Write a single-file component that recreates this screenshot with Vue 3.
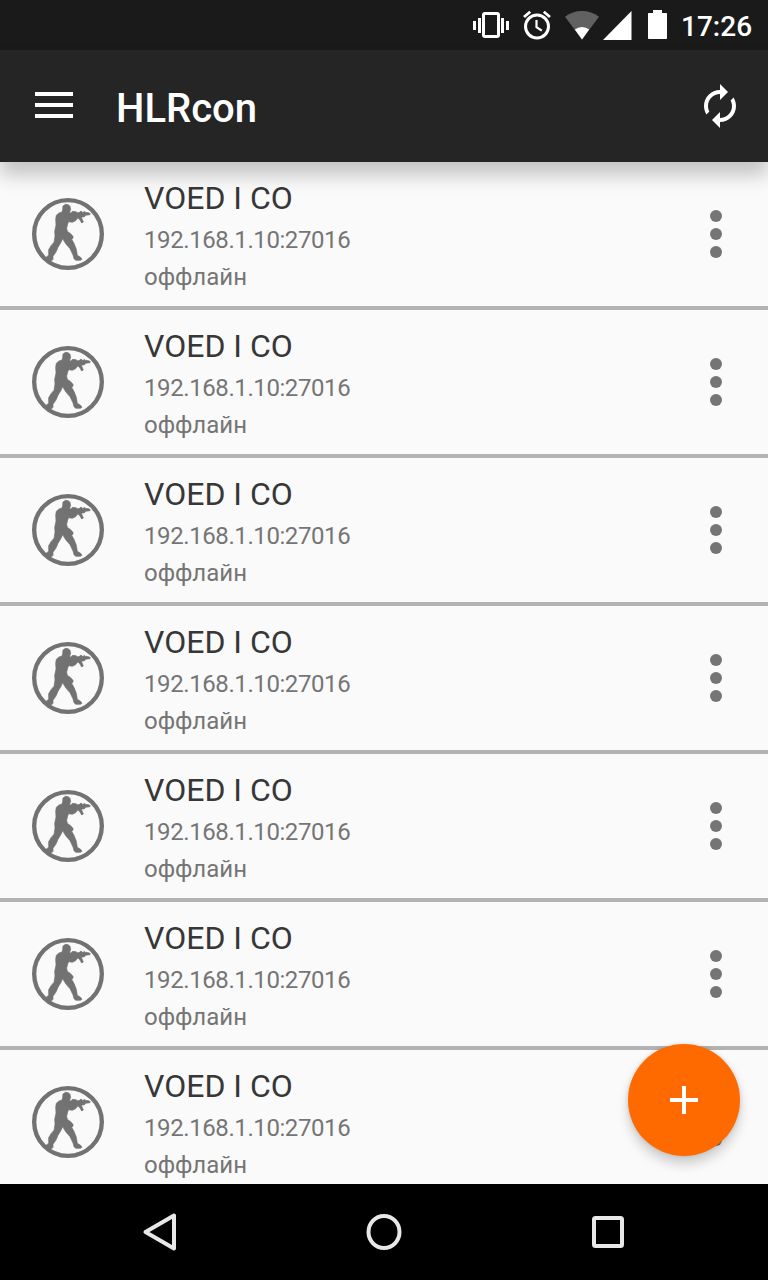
<template>
  <div class="screen">
    <header class="status-bar">
      <svg class="vibrate" width="36" height="28" viewBox="0 0 36 28">
        <rect x="10.5" y="2.5" width="15" height="23" rx="1.5" fill="none" stroke="#fff" stroke-width="3" />
        <path d="M0 10h3v9H0zM5 7h3v15H5zM28 7h3v15h-3zM33 10h3v9h-3z" fill="#fff" />
      </svg>
      <svg class="alarm" width="28" height="30" viewBox="0 0 28 30" fill="none" stroke="#fff">
        <circle cx="14" cy="16.5" r="11.5" stroke-width="3" />
        <path d="M1 7l6.2-5.2M27 7l-6.2-5.2" stroke-width="2.8" />
        <path d="M13.5 10v7.2l5.3 3.5" stroke-width="2.2" />
      </svg>
      <svg class="wifi" width="34" height="29" viewBox="0 0 34 29">
        <path d="M0 5.7Q7.5 0 17 0t17 5.700L17 28.5z" fill="#616161" />
        <path d="M9.8 18.6Q13 16 17 16t7.2 2.600L17 28.5z" fill="#fff" />
      </svg>
      <svg class="signal" width="29" height="29" viewBox="0 0 29 29">
        <path d="M28.5 0v29H0z" fill="#fff" />
      </svg>
      <svg class="battery" width="19" height="29" viewBox="0 0 19 29">
        <path d="M5 0h9v3h4.200q.8 0 .8.800v24.400q0 .8-.8.800H.8Q0 29 0 28.200V3.800Q0 3 .8 3H5z" fill="#fff" />
      </svg>
      <span class="clock">17:26</span>
    </header>

    <div class="toolbar">
      <button class="menu-btn">
        <span></span>
        <span></span>
        <span></span>
      </button>
      <h1>HLRcon</h1>
      <button class="refresh-btn">
        <svg width="48" height="48" viewBox="0 0 24 24" fill="#fff">
          <path d="M12 6v3l4-4-4-4v3c-4.420 0-8 3.580-8 8 0 1.570.46 3.030 1.240 4.260L6.700 14.800c-.45-.83-.7-1.790-.7-2.800 0-3.310 2.690-6 6-6zm6.760 1.740L17.300 9.200c.44.840.7 1.790.7 2.800 0 3.310-2.690 6-6 6v-3l-4 4 4 4v-3c4.420 0 8-3.580 8-8 0-1.570-.46-3.030-1.240-4.260z" />
        </svg>
      </button>
    </div>

    <main class="list">
      <div v-for="server in servers" :key="server.id" class="row">
        <svg class="logo" width="72" height="72" viewBox="6 6 216 216" fill="#727272" stroke="#727272">
          <circle cx="114" cy="114" r="101.5" fill="none" stroke-width="13" />
          <path stroke-width="2" stroke-linejoin="round" d="M99 30L106 25L115 26L120 31L122 40L119 49L122 51L128 46L138 47L142 50L150 49L151 46L155 46L156 49L160 49L163 46L166 49L176 50L181 53L180 56L167 58L164 62L154 64L160 78L155 81L148 69L143 66L137 74L127 79L116 77L113 84L110 97L112 106L122 113L129 121L129 127L125 130L132 142L139 160L142 178L152 184L156 190L151 193L137 193L132 188L129 177L120 158L107 143L98 128L92 141L84 154L78 168L69 181L69 190L63 196L55 195L49 188L50 182L56 178L56 161L63 149L72 139L75 120L74 106L78 87L77 70L79 58L87 51L96 48L98 40Z" />
        </svg>
        <div class="info">
          <div class="name">{{ server.name }}</div>
          <div class="address">{{ server.address }}</div>
          <div class="status">{{ server.status }}</div>
        </div>
        <button class="more-btn">
          <i></i>
          <i></i>
          <i></i>
        </button>
      </div>
    </main>

    <button class="fab">
      <svg width="28" height="28" viewBox="0 0 28 28">
        <path d="M12 0h4v12h12v4H16v12h-4V16H0v-4h12z" fill="#fff" />
      </svg>
    </button>

    <nav class="nav-bar">
      <svg width="40" height="40" viewBox="0 0 40 40">
        <path d="M5.500 20L34 3.500v33z" />
      </svg>
      <svg width="40" height="40" viewBox="0 0 40 40">
        <ellipse cx="20" cy="20" rx="15.500" ry="16" />
      </svg>
      <svg width="40" height="40" viewBox="0 0 40 40">
        <rect x="6" y="6" width="28" height="28" rx="1.500" />
      </svg>
    </nav>
  </div>
</template>

<script setup>
import { ref } from 'vue'

// список серверов
const servers = ref(
  Array.from({ length: 7 }, (_, i) => ({
    id: i + 1,
    name: 'VOED I CO',
    address: '192.168.1.10:27016',
    status: 'оффлайн'
  }))
)
</script>

<style>
body {
  margin: 0;
}
</style>

<style scoped>
.screen {
  position: relative;
  display: flex;
  flex-direction: column;
  width: 768px;
  height: 1280px;
  overflow: hidden;
  background: #fafafa;
  font-family: Roboto, "Noto Sans", sans-serif;
}

svg {
  display: block;
  flex: none;
}

button {
  padding: 0;
  border: 0;
  background: none;
}

.status-bar {
  flex: none;
  display: flex;
  justify-content: flex-end;
  align-items: flex-start;
  height: 50px;
  box-sizing: border-box;
  padding: 10px 16px 0 0;
  background: #1a1a1a;
}

.vibrate {
  margin: 1px 14px 0 0;
}

.alarm {
  margin-right: 14px;
}

.wifi {
  margin: 1px 4px 0 0;
}

.signal {
  margin: 1px 16px 0 0;
}

.battery {
  margin-right: 14px;
}

.clock {
  width: 71px;
  color: #fff;
  font-size: 28px;
  font-weight: 500;
  line-height: 33px;
  white-space: nowrap;
}

.toolbar {
  position: relative;
  z-index: 1;
  flex: none;
  display: flex;
  align-items: center;
  height: 112px;
  box-sizing: border-box;
  padding: 0 24px 0 35px;
  background: #252525;
  box-shadow: 0 13px 18px rgba(0, 0, 0, 0.22);
}

.menu-btn {
  display: flex;
  flex-direction: column;
  gap: 7px;
  width: 38px;
  margin-bottom: 2px;
}

.menu-btn span {
  height: 4px;
  background: #fff;
}

h1 {
  flex: 1;
  margin: 6px 0 0 43px;
  color: #fff;
  font-size: 40px;
  font-weight: 500;
  line-height: 48px;
}

.list {
  flex: 1;
  min-height: 0;
  overflow: hidden;
}

.row {
  display: flex;
  align-items: center;
  height: 148px;
  box-sizing: border-box;
  padding: 0 46px 0 32px;
  border-bottom: 4px solid #b2b2b2;
}

.info {
  flex: 1;
  margin: 2px 0 0 40px;
}

.name {
  color: #373737;
  font-size: 32px;
  line-height: 38px;
}

.address,
.status {
  margin-top: 9px;
  color: #757575;
  font-size: 24px;
  line-height: 28px;
}

.address {
  letter-spacing: -0.41px;
}

.more-btn {
  display: flex;
  flex-direction: column;
  gap: 6px;
}

.more-btn i {
  width: 12px;
  height: 12px;
  border-radius: 50%;
  background: #757575;
}

.fab {
  position: absolute;
  right: 28px;
  bottom: 124px;
  display: flex;
  align-items: center;
  justify-content: center;
  width: 112px;
  height: 112px;
  border-radius: 50%;
  background: #ff6a00;
  box-shadow: 0 8px 12px rgba(0, 0, 0, 0.18), 0 0 4px rgba(0, 0, 0, 0.12);
}

.nav-bar {
  position: relative;
  flex: none;
  display: flex;
  align-items: center;
  justify-content: center;
  gap: 184px;
  height: 96px;
  background: #000;
}

.nav-bar svg {
  fill: none;
  stroke: #e8e8e8;
  stroke-width: 4;
  stroke-linejoin: round;
}
</style>
